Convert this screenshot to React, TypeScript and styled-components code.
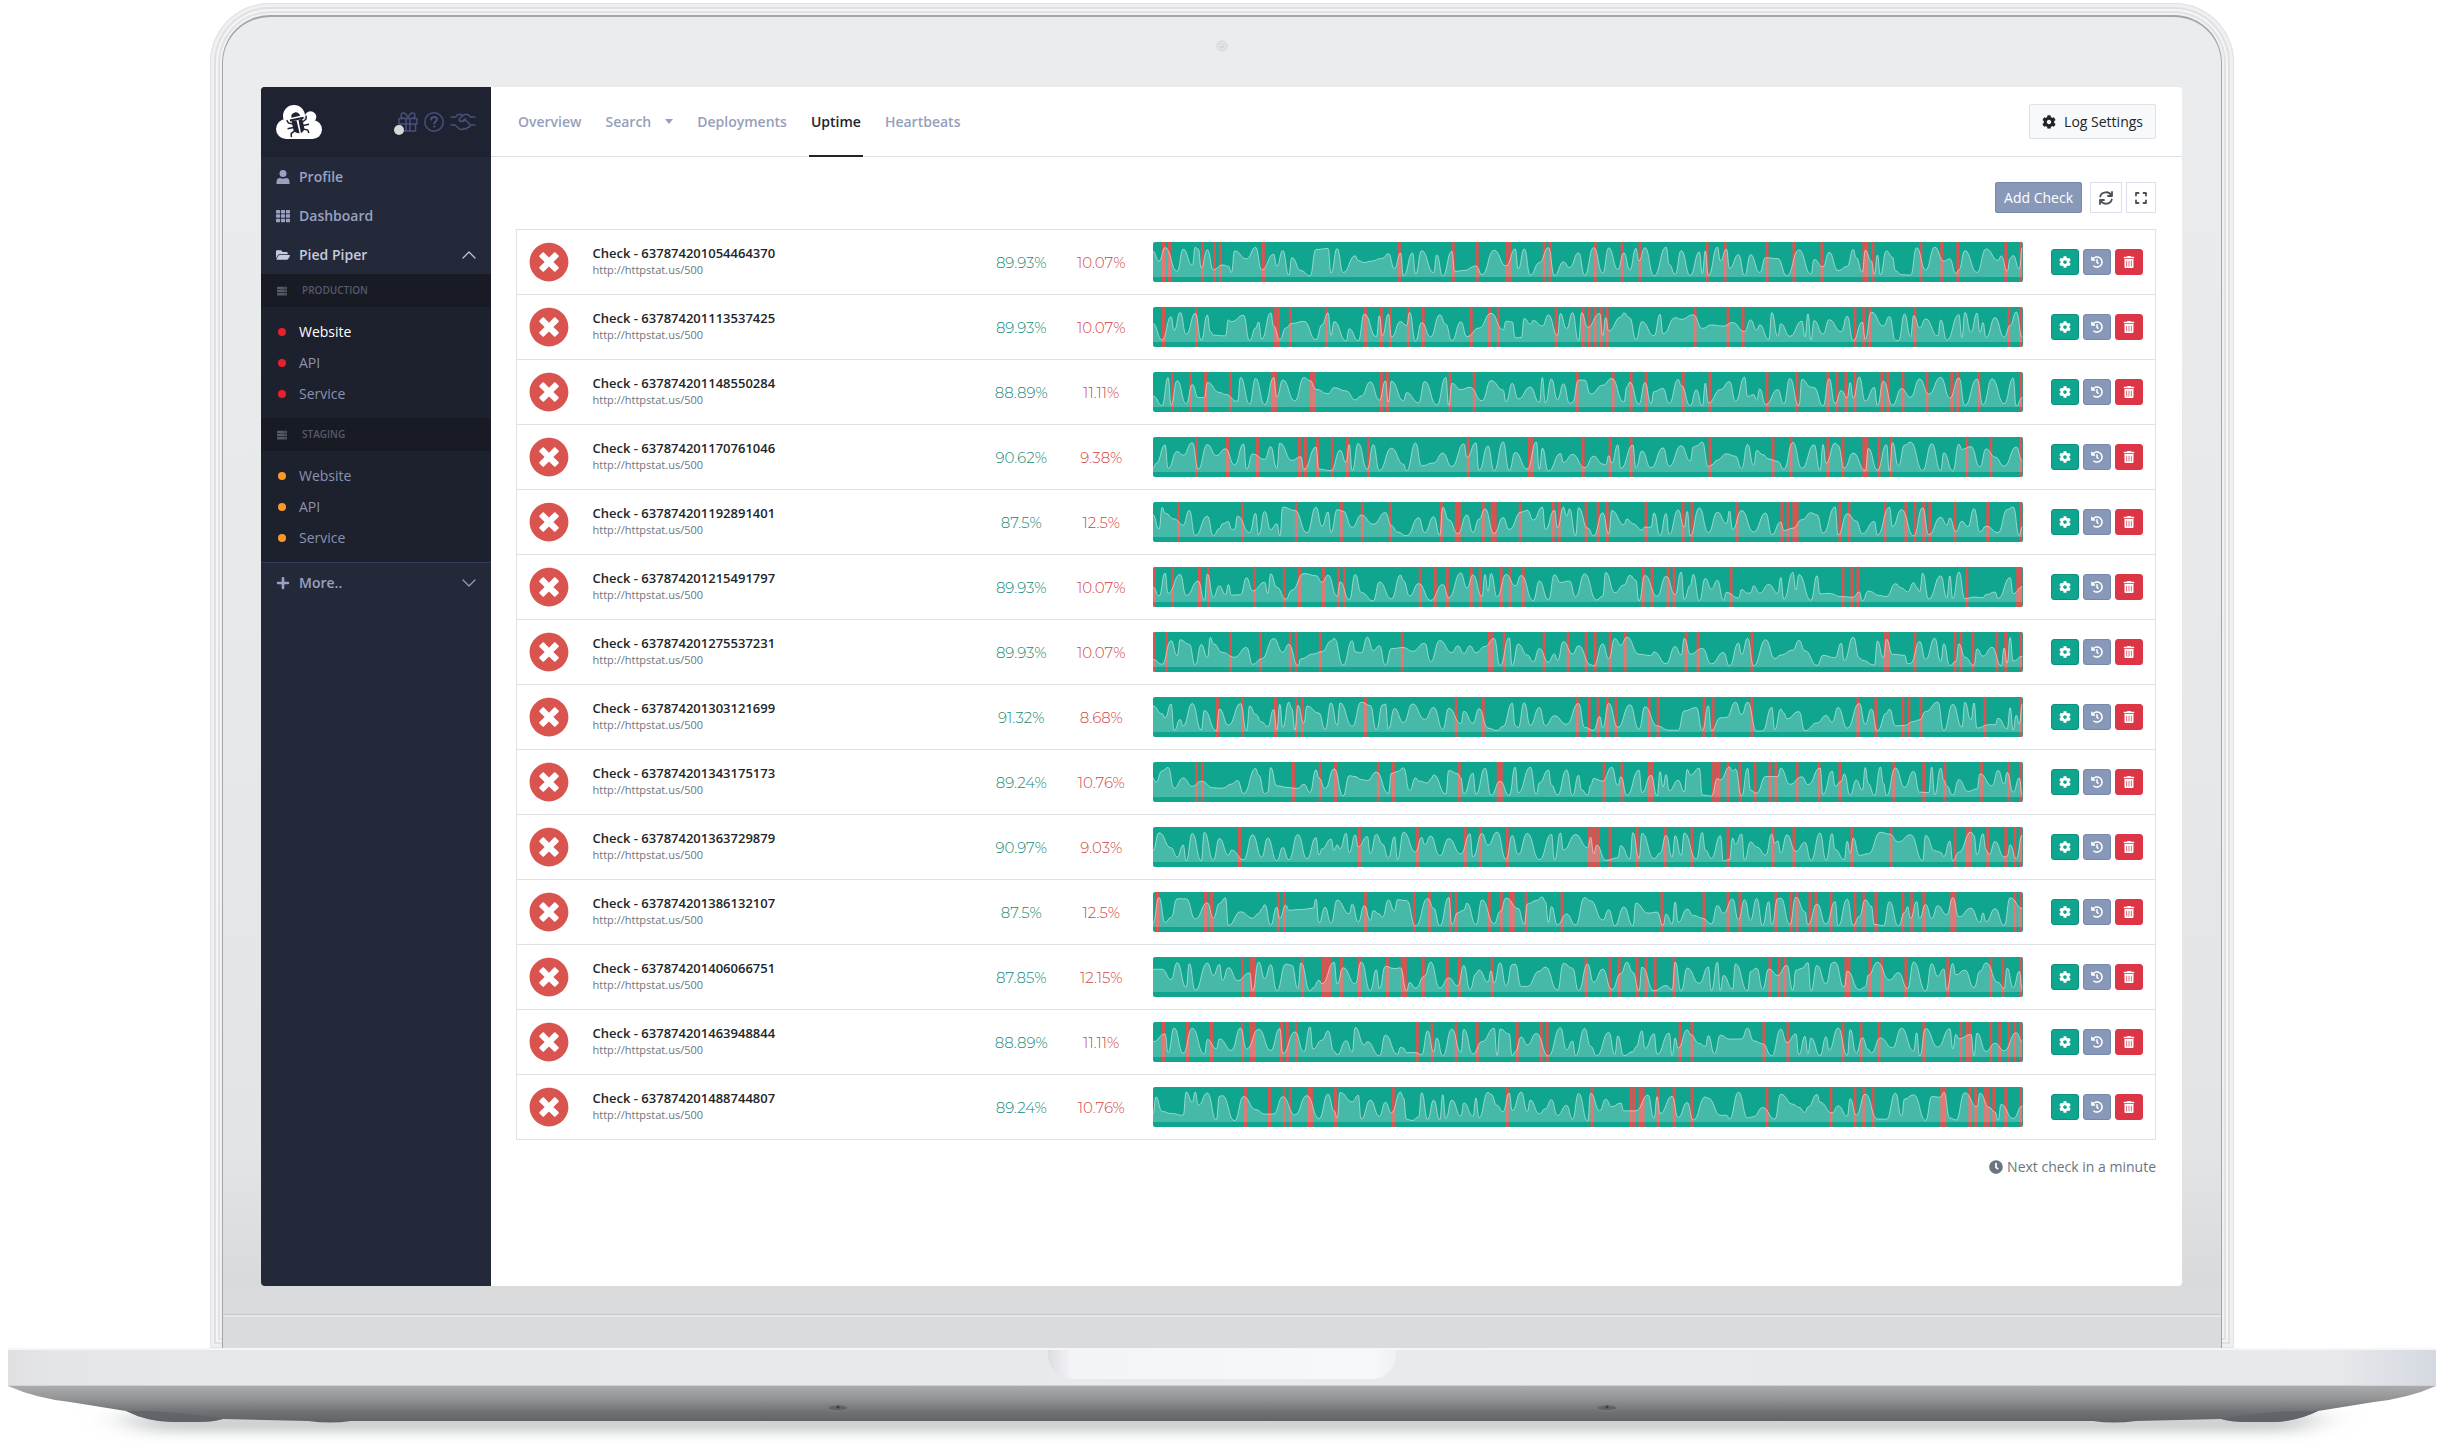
import React from "react";
import styled, { createGlobalStyle, css } from "styled-components";
import {
  FaClock,
  FaCog,
  FaFolderOpen,
  FaHistory,
  FaPlus,
  FaServer,
  FaTh,
  FaTimesCircle,
  FaTrashAlt,
} from "react-icons/fa";

const GlobalStyle = createGlobalStyle`
  *, *::before, *::after { box-sizing: border-box; }
  body {
    margin: 0;
    background: #ffffff;
    color: #212529;
    font-family: "Open Sans", "Noto Sans", sans-serif;
    font-size: 14px;
    line-height: 21px;
  }
  button { font: inherit; cursor: pointer; }
  a { color: inherit; text-decoration: none; }
`;

/* ---------- data ---------- */

type Check = { name: string; up: string; down: string; failures: number[] };

const checks: Check[] = [
  {
    name: "637874201054464370", up: "89.93%", down: "10.07%",
    failures: [3, 5, 16, 20, 22, 36, 81, 99, 107, 117, 118, 129, 131, 146, 155, 161, 183, 189, 203, 212, 221, 235, 236, 238, 254, 261, 266, 282, 287],
  },
  {
    name: "637874201113537425", up: "89.93%", down: "10.07%",
    failures: [3, 14, 40, 41, 45, 57, 70, 75, 78, 84, 89, 105, 111, 114, 133, 142, 144, 146, 148, 150, 179, 190, 195, 232, 235, 237, 252, 283, 287],
  },
  {
    name: "637874201148550284", up: "88.89%", down: "11.11%",
    failures: [6, 12, 17, 25, 39, 40, 52, 53, 75, 77, 98, 106, 140, 152, 158, 163, 175, 184, 203, 213, 223, 226, 229, 232, 241, 243, 248, 256, 264, 266, 273, 287],
  },
  {
    name: "637874201170761046", up: "90.62%", down: "9.38%",
    failures: [14, 24, 34, 48, 50, 54, 59, 64, 71, 104, 124, 125, 142, 151, 158, 184, 205, 211, 223, 228, 235, 236, 240, 244, 269, 277, 287],
  },
  {
    name: "637874201192891401", up: "87.5%", down: "12.5%",
    failures: [8, 29, 47, 62, 69, 78, 95, 100, 101, 109, 112, 113, 121, 132, 134, 143, 147, 150, 163, 175, 178, 193, 208, 210, 212, 213, 227, 230, 242, 249, 252, 255, 257, 265, 276, 287],
  },
  {
    name: "637874201215491797", up: "89.93%", down: "10.07%",
    failures: [0, 6, 15, 18, 33, 43, 48, 56, 61, 63, 88, 93, 97, 105, 108, 115, 118, 122, 162, 165, 170, 172, 191, 228, 231, 233, 269, 286, 287],
  },
  {
    name: "637874201275537231", up: "89.93%", down: "10.07%",
    failures: [0, 4, 25, 35, 45, 47, 55, 82, 111, 112, 116, 129, 137, 143, 146, 151, 156, 176, 180, 198, 242, 243, 252, 265, 267, 271, 279, 282, 287],
  },
  {
    name: "637874201303121699", up: "91.32%", down: "8.68%",
    failures: [21, 29, 40, 47, 49, 70, 100, 109, 140, 144, 147, 150, 153, 164, 167, 182, 185, 198, 233, 239, 248, 250, 254, 275, 287],
  },
  {
    name: "637874201343175173", up: "89.24%", down: "10.76%",
    failures: [14, 16, 46, 55, 60, 74, 79, 101, 114, 115, 149, 155, 164, 165, 185, 186, 187, 190, 194, 199, 204, 206, 213, 220, 227, 245, 255, 262, 274, 283, 287],
  },
  {
    name: "637874201363729879", up: "90.97%", down: "9.03%",
    failures: [28, 68, 87, 103, 108, 117, 144, 145, 146, 147, 151, 160, 169, 178, 190, 205, 212, 231, 244, 265, 269, 270, 276, 282, 285, 287],
  },
  {
    name: "637874201386132107", up: "87.5%", down: "12.5%",
    failures: [1, 17, 19, 41, 43, 70, 86, 91, 98, 100, 111, 115, 118, 119, 123, 135, 168, 182, 190, 194, 206, 211, 213, 217, 219, 224, 232, 235, 239, 248, 251, 255, 264, 265, 285, 287],
  },
  {
    name: "637874201406066751", up: "87.85%", down: "12.15%",
    failures: [29, 32, 33, 49, 56, 57, 58, 62, 68, 77, 82, 83, 89, 97, 101, 112, 143, 151, 154, 160, 163, 166, 172, 204, 207, 209, 229, 230, 237, 241, 249, 263, 277, 281, 287],
  },
  {
    name: "637874201463948844", up: "88.89%", down: "11.11%",
    failures: [3, 11, 19, 29, 32, 33, 42, 44, 47, 87, 92, 100, 107, 120, 128, 130, 174, 178, 202, 210, 228, 234, 240, 255, 267, 269, 270, 277, 280, 283, 285, 287],
  },
  {
    name: "637874201488744807", up: "89.24%", down: "10.76%",
    failures: [30, 38, 43, 45, 51, 52, 60, 79, 117, 145, 158, 159, 161, 162, 167, 172, 178, 203, 224, 232, 235, 238, 261, 262, 270, 272, 275, 276, 278, 282, 287],
  },
];

/* ---------- response time chart ---------- */

const SLOTS = 288;
const CHART_W = 870;
const CHART_H = 40;
const BASELINE = 35;
const SLOT_W = CHART_W / SLOTS;

function randomFrom(seed: number) {
  let state = seed;
  return () => {
    state = (state * 1664525 + 1013904223) % 4294967296;
    return state / 4294967296;
  };
}

function responseCurve(seed: number) {
  const next = randomFrom(seed);
  const steps = [1, 1, 2, 2, 2, 3, 3, 4];
  let slot = 0;
  let x = 0;
  let high = next() > 0.5;
  let y = 6 + next() * 26;
  let d = `M0 ${y.toFixed(1)}`;
  while (slot < SLOTS) {
    slot = Math.min(SLOTS, slot + steps[Math.floor(next() * steps.length)]);
    if (next() > 0.12) high = !high;
    const nx = slot * SLOT_W;
    const ny = high ? 5 + next() * next() * 26 : 34 - next() * next() * 24;
    const mid = ((x + nx) / 2).toFixed(1);
    d += `C${mid} ${y.toFixed(1)} ${mid} ${ny.toFixed(1)} ${nx.toFixed(1)} ${ny.toFixed(1)}`;
    x = nx;
    y = ny;
  }
  return d;
}

const Chart = styled.svg`
  display: block;
  width: 100%;
  height: 40px;
  border-radius: 2px;
  background: #10a58f;
`;

function UptimeChart({ check, seed }: { check: Check; seed: number }) {
  const line = responseCurve(seed);
  return (
    <Chart
      viewBox={`0 0 ${CHART_W} ${CHART_H}`}
      preserveAspectRatio="none"
      role="img"
      aria-label={`Uptime of check ${check.name}`}
    >
      {check.failures.map((slot) => (
        <rect key={slot} x={Math.round(slot * SLOT_W)} width="3" height={CHART_H} fill="#d9534f" />
      ))}
      <path d={`${line}L${CHART_W} ${BASELINE}L0 ${BASELINE}Z`} fill="#ffffff" fillOpacity="0.23" />
      <path d={line} fill="none" stroke="#ffffff" strokeOpacity="0.5" strokeWidth="1" />
    </Chart>
  );
}

/* ---------- icons ---------- */

const Stroked = styled.svg`
  display: block;
  flex: none;
  fill: none;
  stroke: currentColor;
  stroke-linecap: round;
  stroke-linejoin: round;
`;

const LogoIcon = () => (
  <svg width="46" height="34" viewBox="0 0 46 34" aria-hidden="true">
    <g fill="#ffffff">
      <circle cx="18" cy="11" r="11" />
      <circle cx="34.500" cy="12" r="5.800" />
      <circle cx="10" cy="24" r="10" />
      <circle cx="36.500" cy="24.500" r="9.500" />
      <path d="M10 14H37V34H10Z" />
    </g>
    <g transform="rotate(-12 22 20)" fill="#1f2231" stroke="#1f2231" strokeWidth="1.500">
      <path d="M17 11.500a4.500 4.500 0 0 1 9 0Z" stroke="none" />
      <path d="M15 14H29" strokeWidth="2" />
      <path d="M16.500 15h5l.3 13.500q-5-1-5.300-5Z" stroke="none" />
      <path d="M27.500 15h-4l-.3 13.500q4-1 4.300-5Z" stroke="none" />
      <path d="M17 18l-4-2-1-3M17 21.500h-6M17.500 25l-4 2-.5 3.500M27 18l4-2 1-3.500M27 21.500h6M26.500 25l4 2 .5 3" fill="none" />
    </g>
  </svg>
);

const GiftIcon = () => (
  <Stroked width="20" height="20" viewBox="0 0 20 20" strokeWidth="1.500" aria-hidden="true">
    <path d="M1 6.500H19V12H1ZM2.500 12V19H17.500V12M8 6.500V19M12 6.500V19M10 6C8.500 2 7 1 5.500 1S3 2.300 3 3.600 4 6 5 6M10 6c1.500-4 3-5 4.500-5S17 2.300 17 3.600 16 6 15 6" />
  </Stroked>
);

const HelpIcon = () => (
  <Stroked width="20" height="20" viewBox="0 0 20 20" strokeWidth="1.500" aria-hidden="true">
    <circle cx="10" cy="10" r="9.200" />
    <path d="M7.200 7.400C7.400 5.900 8.600 5.100 10.100 5.100c1.600 0 2.800 1 2.800 2.400 0 2-2.700 2-2.700 4.100" strokeWidth="2" />
    <circle cx="10.200" cy="14.600" r="0.700" fill="currentColor" strokeWidth="1" />
  </Stroked>
);

const HandshakeIcon = () => (
  <Stroked width="26" height="18" viewBox="0 0 26 18" strokeWidth="1.500" aria-hidden="true">
    <path d="M1 4H5.500L8 1.500H11L13 2.500M25 4H20.500L18 1.500H14.500L9.500 5.500Q8.500 8 11 8.500L15 6.500L20 11.500M1 12H5L10 16.500H12L14 15.500L16 16L17.500 14.500L19.500 14L20.500 12H25" />
    <path d="M15.500 5.500L13.500 8.500" />
  </Stroked>
);

const UserIcon = () => (
  <svg width="14" height="14" viewBox="0 0 14 14" fill="currentColor" aria-hidden="true">
    <circle cx="7" cy="3.500" r="3.500" />
    <path d="M0.500 14V12Q0.500 8 4 8Q7 9.500 10 8Q13.500 8 13.500 12V14Z" />
  </svg>
);

const ChevronIcon = ({ up }: { up?: boolean }) => (
  <Stroked width="14" height="8" viewBox="0 0 14 8" strokeWidth="1.200" aria-hidden="true">
    <path d={up ? "M1 7L7 1L13 7" : "M1 1L7 7L13 1"} />
  </Stroked>
);

const RefreshIcon = () => (
  <Stroked width="14" height="14" viewBox="0 0 14 14" strokeWidth="1.800" aria-hidden="true">
    <path d="M1.200 5.500A6 5.800 0 0 1 12.500 4.800M13 1V5H9M12.800 8.500A6 5.800 0 0 1 1.500 9.200M1 13V9H5" />
  </Stroked>
);

const ExpandIcon = () => (
  <Stroked width="12" height="12" viewBox="1 1 12 12" strokeWidth="1.800" aria-hidden="true">
    <path d="M2 4.500V2H4.500M9.500 2H12V4.500M12 9.500V12H9.500M4.500 12H2V9.500" />
  </Stroked>
);

/* ---------- laptop shell ---------- */

const Laptop = styled.div`
  padding: 3px 8px 24px;
`;

const Lid = styled.div`
  margin: 0 202px;
  padding: 12px 12px 0;
  border-radius: 60px 60px 0 0;
  background: #f0f1f3;
  box-shadow:
    inset 0 0 0 1px #e3e3e5,
    inset 0 0 0 4px #eff0f2,
    inset 0 0 0 6px #dfe0e2,
    inset 0 0 0 8px #f5f5f7,
    inset 0 0 0 10px #e2e2e5;
`;

const Bezel = styled.div`
  border: solid #a3a4a6;
  border-width: 2px 1px 0;
  border-radius: 48px 48px 0 0;
  background: linear-gradient(180deg, #ebecee 0%, #e8e9eb 40%, #e3e4e6 85%, #d8d9db 96%);
`;

const CameraStrip = styled.div`
  display: flex;
  align-items: center;
  justify-content: center;
  height: 70px;
  padding-bottom: 12px;
`;

const Chin = styled.div`
  height: 62px;
  background: linear-gradient(180deg, #dadbdd 0 28px, #c8c9cb 28px 29px, #e6e7e9 29px 31px, #dadbdd 31px);
`;

const Base = styled.div`
  display: flex;
  justify-content: center;
  height: 38px;
  border-top: 2px solid #f6f6f8;
  border-bottom: 1px solid #d0d1d3;
  background: linear-gradient(90deg, #e0e0e2 0, #e4e5e6 40px, #e6e7e9 140px, #e9eaeb 50%, #e8e9ec calc(100% - 100px), #d4d8e0 100%);
`;

const Notch = styled.div`
  width: 348px;
  height: 29px;
  border-radius: 0 0 24px 24px;
  background: linear-gradient(90deg, #dcdce4 0, #f3f4f7 24px, #f7f8fa calc(100% - 24px), #f0f1f3 100%);
`;

const Underside = styled.svg`
  display: block;
  width: 100%;
  height: 58px;
  margin-bottom: -24px;
  overflow: visible;
`;

/* ---------- application ---------- */

const Screen = styled.div`
  display: flex;
  min-height: calc(100vh - 249px);
  margin: 0 39px 0 38px;
  border-radius: 4px;
  overflow: hidden;
  background: #ffffff;
`;

const Sidebar = styled.aside`
  flex: none;
  width: 230px;
  background: #242939;
  color: #98a2c0;
`;

const Brand = styled.div`
  display: flex;
  align-items: center;
  justify-content: space-between;
  height: 70px;
  padding: 0 15px;
  background: #1f2231;
`;

const BrandLink = styled.a`
  display: flex;
`;

const BrandActions = styled.div`
  display: flex;
  align-items: center;
  gap: 6px;
  color: #47527c;
`;

const GhostButton = styled.button`
  position: relative;
  display: block;
  padding: 0;
  border: 0;
  background: none;
  color: inherit;
`;

const Dot = styled.span`
  position: absolute;
  left: -4px;
  bottom: -3px;
  width: 10px;
  height: 10px;
  border-radius: 50%;
  background: #d6d6d6;
`;

const MenuLink = styled.a<{ $open?: boolean; $ruled?: boolean }>`
  display: flex;
  align-items: center;
  gap: 8px;
  height: 39px;
  padding: 0 15px;
  font-weight: 600;
  color: ${(p) => (p.$open ? "#c6cbdc" : "#98a2c0")};
  ${(p) => p.$ruled && css`height: 40px; border-top: 1px solid #2f3a5c;`}
`;

const MenuIcon = styled.span`
  display: flex;
  width: 15px;
  font-size: 14px;
`;

const MenuText = styled.span`
  flex: 1;
`;

const GroupTitle = styled.h2`
  display: flex;
  align-items: center;
  gap: 15px;
  height: 33px;
  margin: 0;
  padding: 0 16px;
  background: #181a24;
  color: #565a69;
  font-size: 10px;
  font-weight: 600;
  text-transform: uppercase;
`;

const Group = styled.ul`
  margin: 0;
  padding: 9px 0;
  list-style: none;
  background: #1d202d;
`;

const GroupLink = styled.a<{ $tone: string; $active?: boolean }>`
  display: flex;
  align-items: center;
  gap: 13px;
  height: 31px;
  padding: 0 17px;
  color: ${(p) => (p.$active ? "#ffffff" : "#8a93b0")};

  &::before {
    content: "";
    width: 8px;
    height: 8px;
    border-radius: 50%;
    background: ${(p) => p.$tone};
  }
`;

const Main = styled.main`
  flex: 1;
  min-width: 0;
`;

const TopBar = styled.header`
  display: flex;
  align-items: center;
  justify-content: space-between;
  height: 70px;
  padding: 0 26px 0 25px;
  border-bottom: 1px solid #dee1e6;
`;

const Tabs = styled.nav`
  display: flex;
  gap: 20px;
  align-self: stretch;
`;

const Tab = styled.a<{ $active?: boolean }>`
  display: flex;
  align-items: center;
  gap: 14px;
  height: 70px;
  padding: 0 2px;
  border-bottom: 2px solid ${(p) => (p.$active ? "#212529" : "transparent")};
  color: ${(p) => (p.$active ? "#212529" : "#95a0bb")};
  font-weight: 600;
`;

const Caret = styled.span`
  border: 4px solid transparent;
  border-top: 5px solid currentColor;
  border-bottom: 0;
`;

const SettingsButton = styled.button`
  display: flex;
  align-items: center;
  gap: 8px;
  height: 35px;
  padding: 0 12px;
  border: 1px solid #dee2e8;
  border-radius: 2px;
  background: #f8f9fb;
  color: #212529;
`;

const Content = styled.div`
  padding: 25px 26px 25px 25px;
`;

const Toolbar = styled.div`
  display: flex;
  justify-content: flex-end;
  gap: 4px;
  margin-bottom: 16px;
`;

const AddButton = styled.button`
  height: 31px;
  margin-right: 4px;
  padding: 0 8px;
  border: 1px solid #7688ab;
  border-radius: 2px;
  background: #8798b8;
  color: #ffffff;
`;

const ToolButton = styled.button`
  display: flex;
  align-items: center;
  justify-content: center;
  height: 31px;
  padding: 0 8px;
  border: 1px solid #dde0ec;
  background: #ffffff;
  color: #495057;
`;

const CheckTable = styled.table`
  width: 100%;
  table-layout: fixed;
  border-collapse: collapse;
  border: 1px solid #dee2e6;
`;

const Column = styled.col<{ $width: string }>`
  width: ${(p) => p.$width};
`;

const CheckRow = styled.tr`
  height: 65px;
  border-bottom: 1px solid #dee2e6;
`;

const Cell = styled.td<{ $align?: string }>`
  padding: 0 12px;
  text-align: ${(p) => p.$align ?? "left"};
`;

const FailedIcon = styled(FaTimesCircle)`
  display: block;
  font-size: 40px;
  color: #d9534f;
`;

const CheckLabel = styled.div`
  padding-bottom: 2px;
`;

const CheckName = styled.div`
  font-size: 13px;
  line-height: 18px;
  font-weight: 600;
  white-space: nowrap;
`;

const CheckUrl = styled.div`
  color: #6c757d;
  font-size: 11px;
  line-height: 16px;
`;

const Percent = styled.span<{ $down?: boolean }>`
  color: ${(p) => (p.$down ? "#d3453f" : "#158a76")};
  font-family: Montserrat, Inter, sans-serif;
  font-size: 15px;
  font-weight: 300;
`;

const Actions = styled.div`
  display: flex;
  justify-content: flex-end;
  gap: 4px;
`;

const ActionButton = styled.button<{ $fill: string; $edge: string }>`
  display: flex;
  align-items: center;
  justify-content: center;
  width: 28px;
  height: 26px;
  padding: 0;
  border: 1px solid ${(p) => p.$edge};
  border-radius: 3px;
  background: ${(p) => p.$fill};
  color: #ffffff;
  font-size: 12px;
`;

const NextCheck = styled.p`
  display: flex;
  align-items: center;
  justify-content: flex-end;
  gap: 4px;
  margin: 16px 0 0;
  color: #6c757d;
`;

const environments = [
  { title: "Production", tone: "#e4222c", active: "Website" },
  { title: "Staging", tone: "#fd9727", active: "" },
];

const services = ["Website", "API", "Service"];

export default function App() {
  return (
    <>
      <GlobalStyle />
      <Laptop>
        <Lid>
          <Bezel>
            <CameraStrip>
              <svg width="12" height="12" viewBox="0 0 12 12" aria-hidden="true">
                <circle cx="6" cy="6" r="5" fill="#e1e2e4" stroke="#d6d7d9" />
                <circle cx="6" cy="6" r="2" fill="#d0d1d3" />
                <circle cx="6" cy="5.500" r="0.800" fill="#ffffff" />
              </svg>
            </CameraStrip>
            <Screen>
              <Sidebar>
                <Brand>
                  <BrandLink href="#home" aria-label="Home"><LogoIcon /></BrandLink>
                  <BrandActions>
                    <GhostButton type="button" aria-label="What is new"><GiftIcon /><Dot /></GhostButton>
                    <GhostButton type="button" aria-label="Help"><HelpIcon /></GhostButton>
                    <GhostButton type="button" aria-label="Partners"><HandshakeIcon /></GhostButton>
                  </BrandActions>
                </Brand>
                <nav aria-label="Main">
                  <MenuLink href="#profile"><MenuIcon><UserIcon /></MenuIcon><MenuText>Profile</MenuText></MenuLink>
                  <MenuLink href="#dashboard"><MenuIcon><FaTh /></MenuIcon><MenuText>Dashboard</MenuText></MenuLink>
                  <MenuLink href="#pied-piper" $open>
                    <MenuIcon><FaFolderOpen /></MenuIcon><MenuText>Pied Piper</MenuText><ChevronIcon up />
                  </MenuLink>
                  {environments.map((env) => (
                    <React.Fragment key={env.title}>
                      <GroupTitle><FaServer aria-hidden="true" />{env.title}</GroupTitle>
                      <Group>
                        {services.map((name) => (
                          <li key={name}>
                            <GroupLink href={`#${env.title}-${name}`} $tone={env.tone} $active={env.active === name}>
                              {name}
                            </GroupLink>
                          </li>
                        ))}
                      </Group>
                    </React.Fragment>
                  ))}
                  <MenuLink href="#more" $ruled>
                    <MenuIcon><FaPlus /></MenuIcon><MenuText>More..</MenuText><ChevronIcon />
                  </MenuLink>
                </nav>
              </Sidebar>
              <Main>
                <TopBar>
                  <Tabs aria-label="Log">
                    <Tab href="#overview">Overview</Tab>
                    <Tab href="#search">Search<Caret /></Tab>
                    <Tab href="#deployments">Deployments</Tab>
                    <Tab href="#uptime" $active aria-current="page">Uptime</Tab>
                    <Tab href="#heartbeats">Heartbeats</Tab>
                  </Tabs>
                  <SettingsButton type="button"><FaCog aria-hidden="true" />Log Settings</SettingsButton>
                </TopBar>
                <Content>
                  <Toolbar>
                    <AddButton type="button">Add Check</AddButton>
                    <ToolButton type="button" aria-label="Refresh"><RefreshIcon /></ToolButton>
                    <ToolButton type="button" aria-label="Full screen"><ExpandIcon /></ToolButton>
                  </Toolbar>
                  <CheckTable>
                    <colgroup>
                      <Column $width="64px" />
                      <Column $width="auto" />
                      <Column $width="80px" />
                      <Column $width="80px" />
                      <Column $width="54.5%" />
                      <Column $width="121px" />
                    </colgroup>
                    <tbody>
                      {checks.map((check, i) => (
                        <CheckRow key={check.name}>
                          <Cell><FailedIcon title="Failing" /></Cell>
                          <Cell>
                            <CheckLabel>
                              <CheckName>Check - {check.name}</CheckName>
                              <CheckUrl>http://httpstat.us/500</CheckUrl>
                            </CheckLabel>
                          </Cell>
                          <Cell $align="center"><Percent>{check.up}</Percent></Cell>
                          <Cell $align="center"><Percent $down>{check.down}</Percent></Cell>
                          <Cell><UptimeChart check={check} seed={(i + 3) * 7919} /></Cell>
                          <Cell>
                            <Actions>
                              <ActionButton type="button" aria-label="Edit check" $fill="#10a58f" $edge="#0c917d"><FaCog /></ActionButton>
                              <ActionButton type="button" aria-label="History" $fill="#8798b8" $edge="#7688ab"><FaHistory /></ActionButton>
                              <ActionButton type="button" aria-label="Delete check" $fill="#dc3545" $edge="#dc3545"><FaTrashAlt /></ActionButton>
                            </Actions>
                          </Cell>
                        </CheckRow>
                      ))}
                    </tbody>
                  </CheckTable>
                  <NextCheck><FaClock aria-hidden="true" />Next check in a minute</NextCheck>
                </Content>
              </Main>
            </Screen>
            <Chin />
          </Bezel>
        </Lid>
        <Base><Notch /></Base>
        <Underside viewBox="0 0 2428 58" preserveAspectRatio="none" aria-hidden="true">
          <defs>
            <linearGradient id="under" x1="0" y1="0" x2="0" y2="1">
              <stop offset="0" stopColor="#a9abad" />
              <stop offset="0.350" stopColor="#929496" />
              <stop offset="0.700" stopColor="#707276" />
              <stop offset="1" stopColor="#606165" />
            </linearGradient>
            <filter id="soft" x="-5%" y="-100%" width="110%" height="300%">
              <feGaussianBlur stdDeviation="20 6" />
            </filter>
          </defs>
          <path d="M110 28H2318L2290 46H138Z" fill="#c9cccd" filter="url(#soft)" />
          <path
            d="M0 0Q27 12 62 16L118 25Q140 36 165 36H190Q205 36 215 33L300 35Q323 38 343 35H2085Q2105 38 2128 35L2213 33Q2223 36 2238 36H2263Q2288 36 2310 25L2366 16Q2401 12 2428 0Z"
            fill="url(#under)"
          />
          <path d="M118 25Q165 24 215 33Q205 36 190 36H165Q140 36 118 25ZM2310 25Q2263 24 2213 33Q2223 36 2238 36H2263Q2288 36 2310 25Z" fill="#5f6166" fillOpacity="0.700" />
          <g fill="#626468" stroke="#7d7f83">
            <ellipse cx="830" cy="22" rx="10" ry="3" />
            <ellipse cx="1599" cy="22" rx="10" ry="3" />
          </g>
          <g fill="#3c3d40">
            <circle cx="830" cy="21" r="1.500" />
            <circle cx="1599" cy="21" r="1.500" />
          </g>
        </Underside>
      </Laptop>
    </>
  );
}
